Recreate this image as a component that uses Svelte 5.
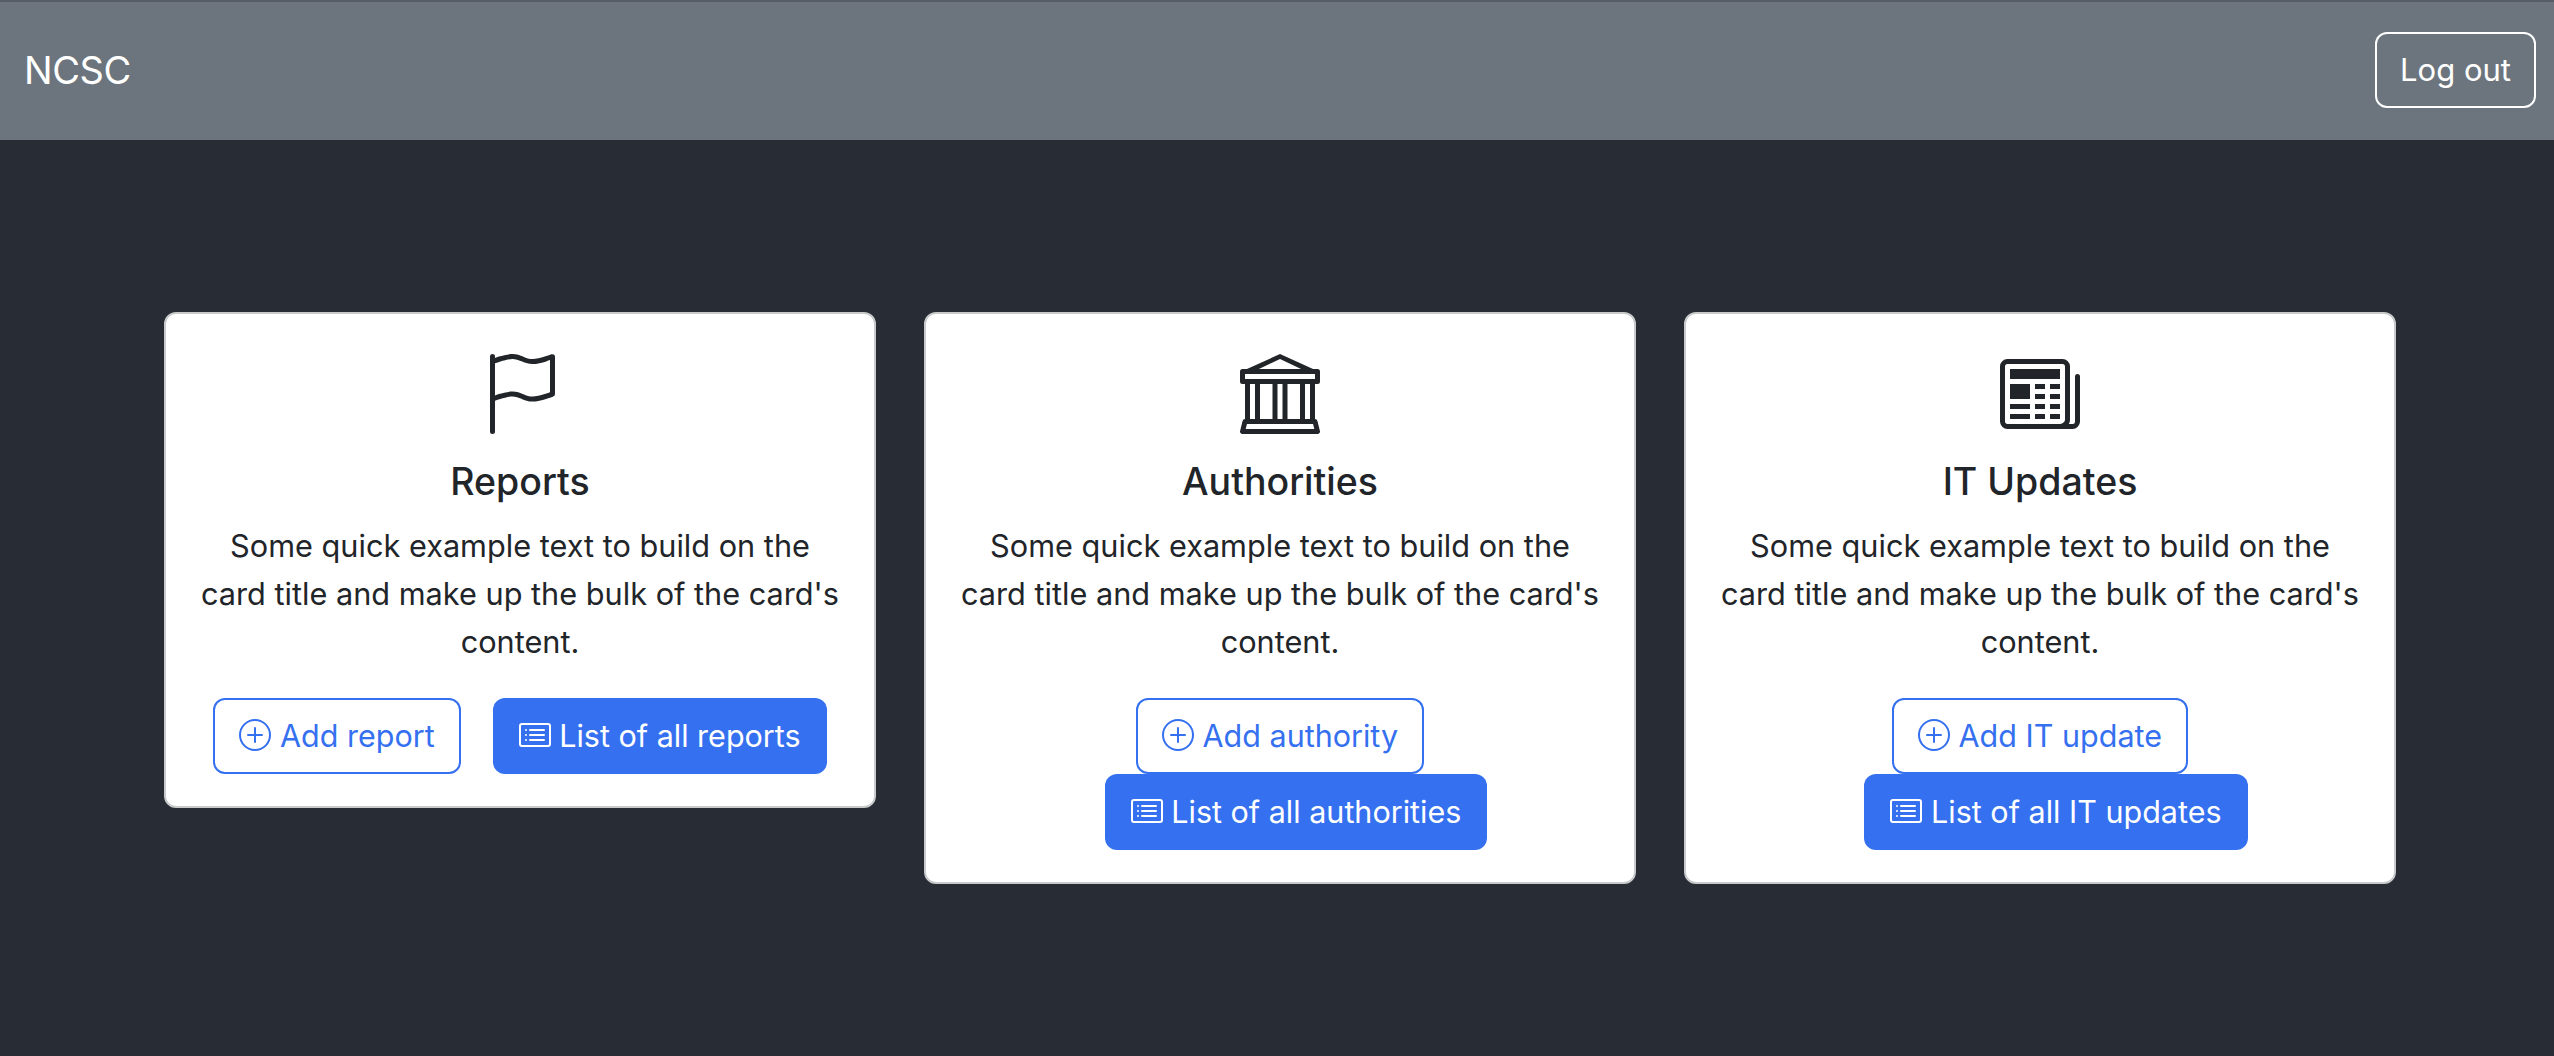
<script>
  const cards = [
    { title: "Reports", icon: "flag", add: "Add report", list: "List of all reports" },
    { title: "Authorities", icon: "bank", add: "Add authority", list: "List of all authorities" },
    { title: "IT Updates", icon: "news", add: "Add IT update", list: "List of all IT updates" }
  ];
</script>

<nav class="navbar">
  <span class="brand">NCSC</span>
  <button class="btn logout">Log out</button>
</nav>

<main class="cards">
  {#each cards as card}
    <section class="card">
      <svg class="big-icon" viewBox="0 0 16 16" fill="currentColor">
        {#if card.icon === "flag"}
          <path d="M14.778.085A.5.5 0 0 1 15 .5V8a.5.5 0 0 1-.314.464L14.5 8l.186.464-.003.001-.006.003-.023.009a12.435 12.435 0 0 1-.397.15c-.264.095-.631.223-1.047.35-.816.252-1.879.523-2.71.523-.847 0-1.548-.28-2.158-.525l-.028-.01C7.68 8.71 7.14 8.5 6.5 8.5c-.7 0-1.638.23-2.437.477A19.626 19.626 0 0 0 3 9.342V15.5a.5.5 0 0 1-1 0V.5a.5.5 0 0 1 1 0v.282c.226-.079.496-.17.79-.26C4.606.272 5.67 0 6.5 0c.84 0 1.524.277 2.121.519l.043.018C9.286.788 9.828 1 10.5 1c.7 0 1.638-.23 2.437-.477a19.587 19.587 0 0 0 1.349-.476l.019-.007.004-.002h.001M14 1.221c-.22.078-.48.167-.766.255-.81.252-1.872.523-2.734.523-.886 0-1.592-.286-2.203-.534l-.008-.003C7.662 1.21 7.139 1 6.5 1c-.669 0-1.606.229-2.415.478A21.294 21.294 0 0 0 3 1.845v6.433c.22-.078.48-.167.766-.255C4.576 7.77 5.638 7.5 6.5 7.5c.847 0 1.548.28 2.158.525l.028.01C9.32 8.29 9.86 8.5 10.5 8.5c.668 0 1.606-.229 2.415-.478A21.317 21.317 0 0 0 14 7.655V1.222z" />
        {:else if card.icon === "bank"}
          <path d="m8 0 6.61 3h.89a.5.5 0 0 1 .5.5v2a.5.5 0 0 1-.5.5H15v7a.5.5 0 0 1 .485.38l.5 2a.498.498 0 0 1-.485.62H.5a.498.498 0 0 1-.485-.62l.5-2A.501.501 0 0 1 1 13V6H.5a.5.5 0 0 1-.5-.5v-2A.5.5 0 0 1 .5 3h.89L8 0ZM3.777 3h8.447L8 1 3.777 3ZM2 6v7h1V6H2Zm2 0v7h2.5V6H4Zm3.5 0v7h1V6h-1Zm2 0v7H12V6H9.5ZM13 6v7h1V6h-1Zm2-1V4H1v1h14Zm-.39 9H1.39l-.25 1h13.72l-.25-1Z" />
        {:else}
          <path d="M0 2.5A1.5 1.5 0 0 1 1.5 1h11A1.5 1.5 0 0 1 14 2.5v10.528c0 .3-.05.654-.238.972h.738a.5.5 0 0 0 .5-.5v-9a.5.5 0 0 1 1 0v9a1.5 1.5 0 0 1-1.5 1.5H1.497A1.497 1.497 0 0 1 0 13.5v-11zM12 14c.37 0 .654-.211.853-.441.092-.106.147-.279.147-.531V2.5a.5.5 0 0 0-.5-.5h-11a.5.5 0 0 0-.5.5v11c0 .278.223.5.497.5H12z" />
          <path d="M2 3h10v2H2V3zm0 3h4v3H2V6zm0 4h4v1H2v-1zm0 2h4v1H2v-1zm5-6h2v1H7V6zm3 0h2v1h-2V6zM7 8h2v1H7V8zm3 0h2v1h-2V8zm-3 2h2v1H7v-1zm3 0h2v1h-2v-1zm-3 2h2v1H7v-1zm3 0h2v1h-2v-1z" />
        {/if}
      </svg>
      <h5 class="title">{card.title}</h5>
      <p class="text">Some quick example text to build on the card title and make up the bulk of the card's content.</p>
      <div class="actions">
        <button class="btn outline">
          <svg class="btn-icon" viewBox="0 0 16 16" fill="currentColor">
            <path d="M8 15A7 7 0 1 1 8 1a7 7 0 0 1 0 14zm0 1A8 8 0 1 0 8 0a8 8 0 0 0 0 16z" />
            <path d="M8 4a.5.5 0 0 1 .5.5v3h3a.5.5 0 0 1 0 1h-3v3a.5.5 0 0 1-1 0v-3h-3a.5.5 0 0 1 0-1h3v-3A.5.5 0 0 1 8 4z" />
          </svg>
          {card.add}
        </button>
        <button class="btn solid">
          <svg class="btn-icon" viewBox="0 0 16 16" fill="currentColor">
            <path d="M14.5 3a.5.5 0 0 1 .5.5v9a.5.5 0 0 1-.5.5h-13a.5.5 0 0 1-.5-.5v-9a.5.5 0 0 1 .5-.5h13zm-13-1A1.5 1.5 0 0 0 0 3.5v9A1.5 1.5 0 0 0 1.5 14h13a1.5 1.5 0 0 0 1.5-1.5v-9A1.5 1.5 0 0 0 14.5 2h-13z" />
            <path d="M5 8a.5.5 0 0 1 .5-.5h7a.5.5 0 0 1 0 1h-7A.5.5 0 0 1 5 8zm0-2.5a.5.5 0 0 1 .5-.5h7a.5.5 0 0 1 0 1h-7a.5.5 0 0 1-.5-.5zm0 5a.5.5 0 0 1 .5-.5h7a.5.5 0 0 1 0 1h-7a.5.5 0 0 1-.5-.5zm-1-5a.5.5 0 1 1-1 0 .5.5 0 0 1 1 0zM4 8a.5.5 0 1 1-1 0 .5.5 0 0 1 1 0zm0 2.5a.5.5 0 1 1-1 0 .5.5 0 0 1 1 0z" />
          </svg>
          {card.list}
        </button>
      </div>
    </section>
  {/each}
</main>

<style>
  :global(body) {
    background: #282c34;
    font-family: Inter, "Liberation Sans", sans-serif;
    color: #212529;
  }

  .navbar {
    height: 140px;
    box-sizing: border-box;
    border-top: 2px solid #565c63;
    background: #6c757d;
    display: flex;
    align-items: center;
    justify-content: space-between;
    padding: 0 18px 3px 24px;
  }

  .brand {
    color: #fff;
    font-size: 38px;
    letter-spacing: -0.4px;
  }

  .cards {
    display: grid;
    grid-template-columns: repeat(3, 712px);
    align-items: start;
    gap: 48px;
    padding: 172px 0 0 164px;
  }

  .card {
    box-sizing: border-box;
    background: #fff;
    border: 2px solid #c9cacc;
    border-radius: 12px;
    padding: 40px 32px 32px;
    text-align: center;
  }

  .big-icon {
    display: block;
    width: 80px;
    height: 80px;
    margin: 0 auto;
  }

  .title {
    margin: 0;
    padding-top: 24px;
    font-size: 37.5px;
    font-weight: 500;
    line-height: 48px;
  }

  .text {
    margin: 16px 0 31.5px;
    font-size: 30.7px;
    line-height: 48px;
  }

  .actions {
    display: flex;
    flex-wrap: wrap;
    justify-content: center;
  }

  .btn {
    box-sizing: border-box;
    height: 76px;
    padding: 0 24px;
    border: 2px solid transparent;
    border-radius: 12px;
    font: inherit;
    font-size: 30.5px;
    white-space: nowrap;
    background: transparent;
  }

  .btn-icon {
    width: 32px;
    height: 32px;
    vertical-align: -4px;
  }

  .logout {
    color: #fff;
    border-color: #fff;
    font-size: 31px;
    padding: 0 23px;
  }

  .outline {
    color: #3570f0;
    border-color: #3570f0;
    background: #fff;
  }

  .solid {
    color: #fff;
    background: #3570f0;
    margin-left: 32px;
  }
</style>
